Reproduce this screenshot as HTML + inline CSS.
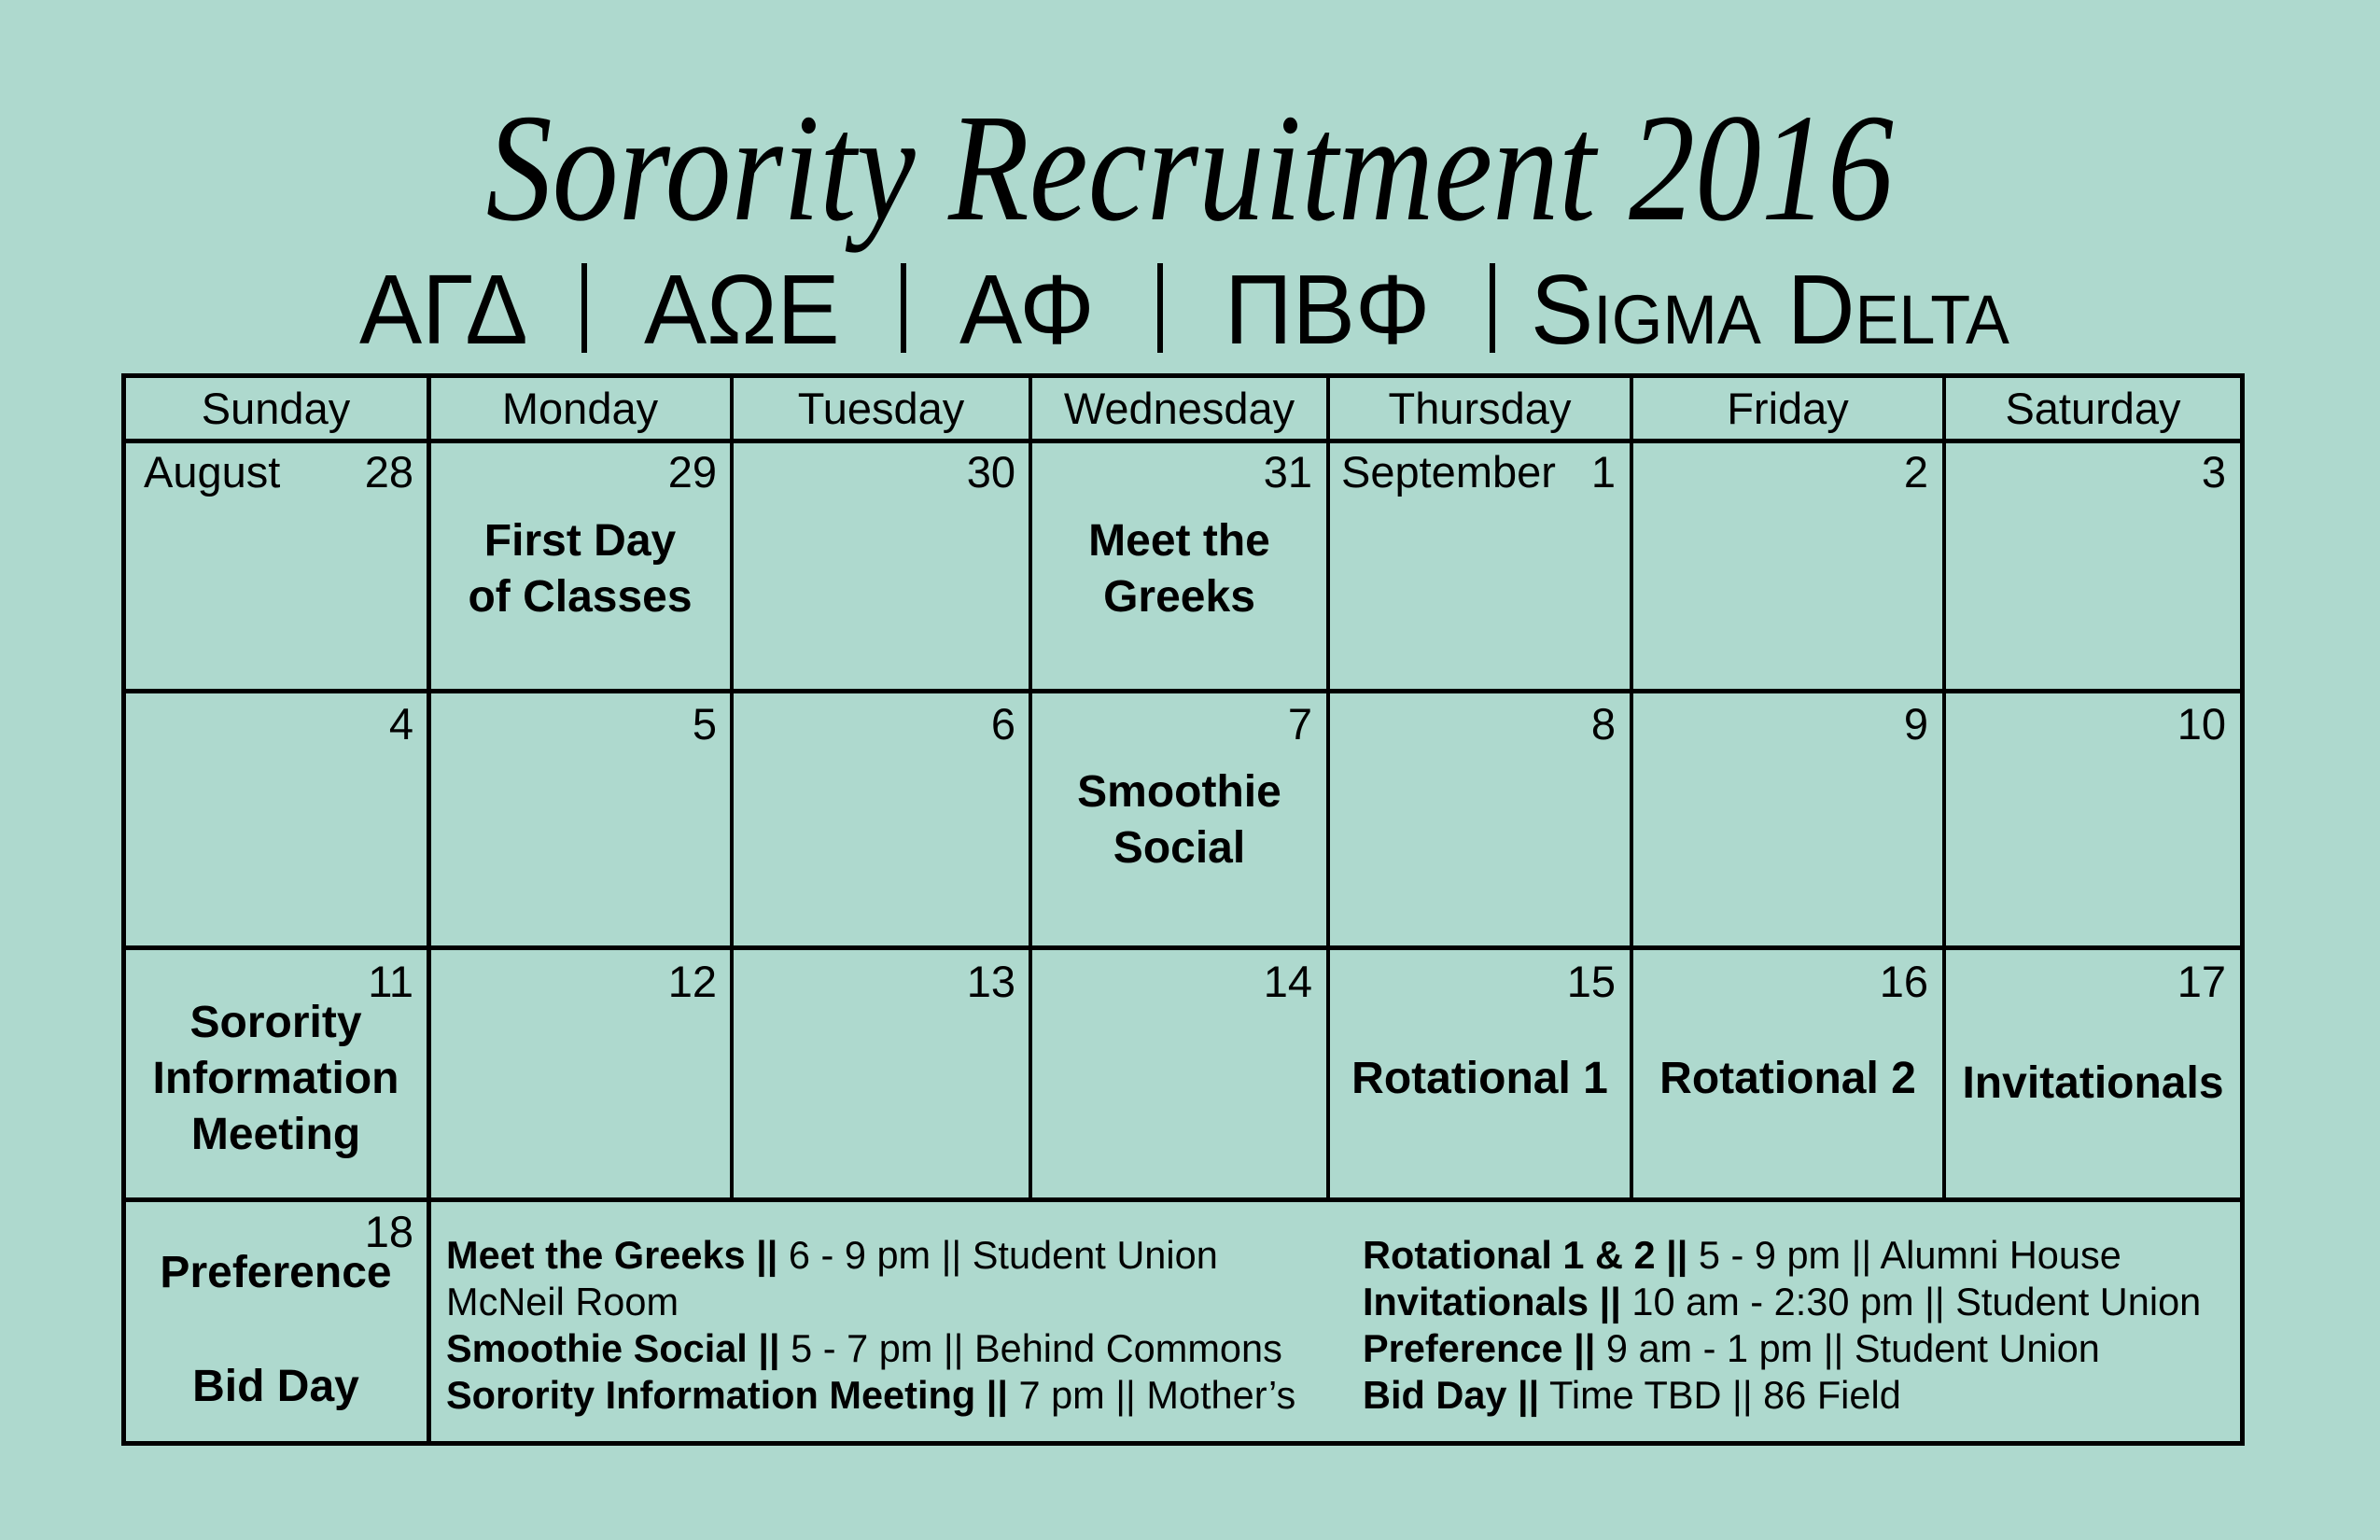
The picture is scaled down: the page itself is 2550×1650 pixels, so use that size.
<!DOCTYPE html>
<html><head><meta charset="utf-8"><style>
body{margin:0;width:2550px;height:1650px;background:#aed9ce;position:relative;overflow:hidden;font-family:"Liberation Sans",Arial,sans-serif;color:#000}
.a{position:absolute}
.h{position:absolute;background:#000}
.c{position:absolute;text-align:center;white-space:nowrap}
.d{position:absolute;font-size:47px;line-height:56px;text-align:right;white-space:nowrap}
.e{position:absolute;font-size:48px;font-weight:bold;line-height:60px;text-align:center;white-space:nowrap}
.dh{position:absolute;top:402px;height:70px;line-height:72px;font-size:47px;text-align:center}
.lg{position:absolute;font-size:41.5px;line-height:50px;white-space:nowrap}
.gk{position:absolute;top:272px;font-size:106px;line-height:120px;white-space:nowrap;transform:scaleX(0.95);transform-origin:left center}
.bar{position:absolute;top:282px;width:6px;height:96px;background:#000}
</style></head><body>
<div class="c" style="left:0;width:2550px;top:85px;font-family:'Liberation Serif',serif;font-style:italic;font-size:165px;line-height:190px;"><span style="display:inline-block;transform:scaleX(0.86);">Sorority Recruitment 2016</span></div>
<div class="gk" style="left:385px">ΑΓΔ</div>
<div class="bar" style="left:623px"></div>
<div class="gk" style="left:690px">ΑΩΕ</div>
<div class="bar" style="left:965px"></div>
<div class="gk" style="left:1028px">ΑΦ</div>
<div class="bar" style="left:1240px"></div>
<div class="gk" style="left:1312px">ΠΒΦ</div>
<div class="bar" style="left:1596px"></div>
<div class="gk" style="left:1640px;font-variant:small-caps">Sigma Delta</div>

<div class="h" style="left:130px;top:400px;width:2274px;height:5px"></div>
<div class="h" style="left:130px;top:470px;width:2274px;height:5px"></div>
<div class="h" style="left:130px;top:738px;width:2274px;height:5px"></div>
<div class="h" style="left:130px;top:1013px;width:2274px;height:5px"></div>
<div class="h" style="left:130px;top:1283px;width:2274px;height:5px"></div>
<div class="h" style="left:130px;top:1544px;width:2274px;height:5px"></div>
<div class="h" style="left:130px;top:400px;width:5px;height:1149px"></div>
<div class="h" style="left:457px;top:400px;width:5px;height:1149px"></div>
<div class="h" style="left:2400px;top:400px;width:5px;height:1149px"></div>
<div class="h" style="left:782px;top:400px;width:4px;height:888px"></div>
<div class="h" style="left:1102px;top:400px;width:4px;height:888px"></div>
<div class="h" style="left:1421px;top:400px;width:4px;height:888px"></div>
<div class="h" style="left:1746px;top:400px;width:4px;height:888px"></div>
<div class="h" style="left:2081px;top:400px;width:4px;height:888px"></div>

<div class="dh" style="left:132px;width:327px">Sunday</div>
<div class="dh" style="left:459px;width:325px">Monday</div>
<div class="dh" style="left:784px;width:320px">Tuesday</div>
<div class="dh" style="left:1104px;width:319px">Wednesday</div>
<div class="dh" style="left:1423px;width:325px">Thursday</div>
<div class="dh" style="left:1748px;width:335px">Friday</div>
<div class="dh" style="left:2083px;width:319px">Saturday</div>

<div class="d" style="left:154px;top:478px;text-align:left">August</div>
<div class="d" style="left:140px;width:303px;top:478px">28</div>
<div class="d" style="left:462px;width:306px;top:478px">29</div>
<div class="d" style="left:786px;width:302px;top:478px">30</div>
<div class="d" style="left:1106px;width:300px;top:478px">31</div>
<div class="d" style="left:1437px;top:478px;text-align:left">September</div>
<div class="d" style="left:1425px;width:306px;top:478px">1</div>
<div class="d" style="left:1750px;width:316px;top:478px">2</div>
<div class="d" style="left:2085px;width:300px;top:478px">3</div>
<div class="e" style="left:459px;width:325px;top:550px">First Day<br>of Classes</div>
<div class="e" style="left:1104px;width:319px;top:550px">Meet the<br>Greeks</div>
<div class="d" style="left:140px;width:303px;top:748px">4</div>
<div class="d" style="left:462px;width:306px;top:748px">5</div>
<div class="d" style="left:786px;width:302px;top:748px">6</div>
<div class="d" style="left:1106px;width:300px;top:748px">7</div>
<div class="d" style="left:1425px;width:306px;top:748px">8</div>
<div class="d" style="left:1750px;width:316px;top:748px">9</div>
<div class="d" style="left:2085px;width:300px;top:748px">10</div>
<div class="e" style="left:1104px;width:319px;top:819px">Smoothie<br>Social</div>
<div class="d" style="left:140px;width:303px;top:1024px">11</div>
<div class="d" style="left:462px;width:306px;top:1024px">12</div>
<div class="d" style="left:786px;width:302px;top:1024px">13</div>
<div class="d" style="left:1106px;width:300px;top:1024px">14</div>
<div class="d" style="left:1425px;width:306px;top:1024px">15</div>
<div class="d" style="left:1750px;width:316px;top:1024px">16</div>
<div class="d" style="left:2085px;width:300px;top:1024px">17</div>
<div class="e" style="left:132px;width:327px;top:1066px">Sorority<br>Information<br>Meeting</div>
<div class="e" style="left:1423px;width:325px;top:1126px">Rotational 1</div>
<div class="e" style="left:1748px;width:335px;top:1126px">Rotational 2</div>
<div class="e" style="left:2083px;width:319px;top:1131px">Invitationals</div>
<div class="d" style="left:140px;width:303px;top:1292px">18</div>
<div class="e" style="left:132px;width:327px;top:1334px">Preference</div>
<div class="e" style="left:132px;width:327px;top:1456px">Bid Day</div>
<div class="lg" style="left:478px;top:1320px"><b>Meet the Greeks ||</b> 6 - 9 pm || Student Union<br>McNeil Room<br><b>Smoothie Social ||</b> 5 - 7 pm || Behind Commons<br><b>Sorority Information Meeting ||</b> 7 pm || Mother’s</div>
<div class="lg" style="left:1460px;top:1320px"><b>Rotational 1 &amp; 2 ||</b> 5 - 9 pm || Alumni House<br><b>Invitationals ||</b> 10 am - 2:30 pm || Student Union<br><b>Preference ||</b> 9 am - 1 pm || Student Union<br><b>Bid Day ||</b> Time TBD || 86 Field</div>
</body></html>
